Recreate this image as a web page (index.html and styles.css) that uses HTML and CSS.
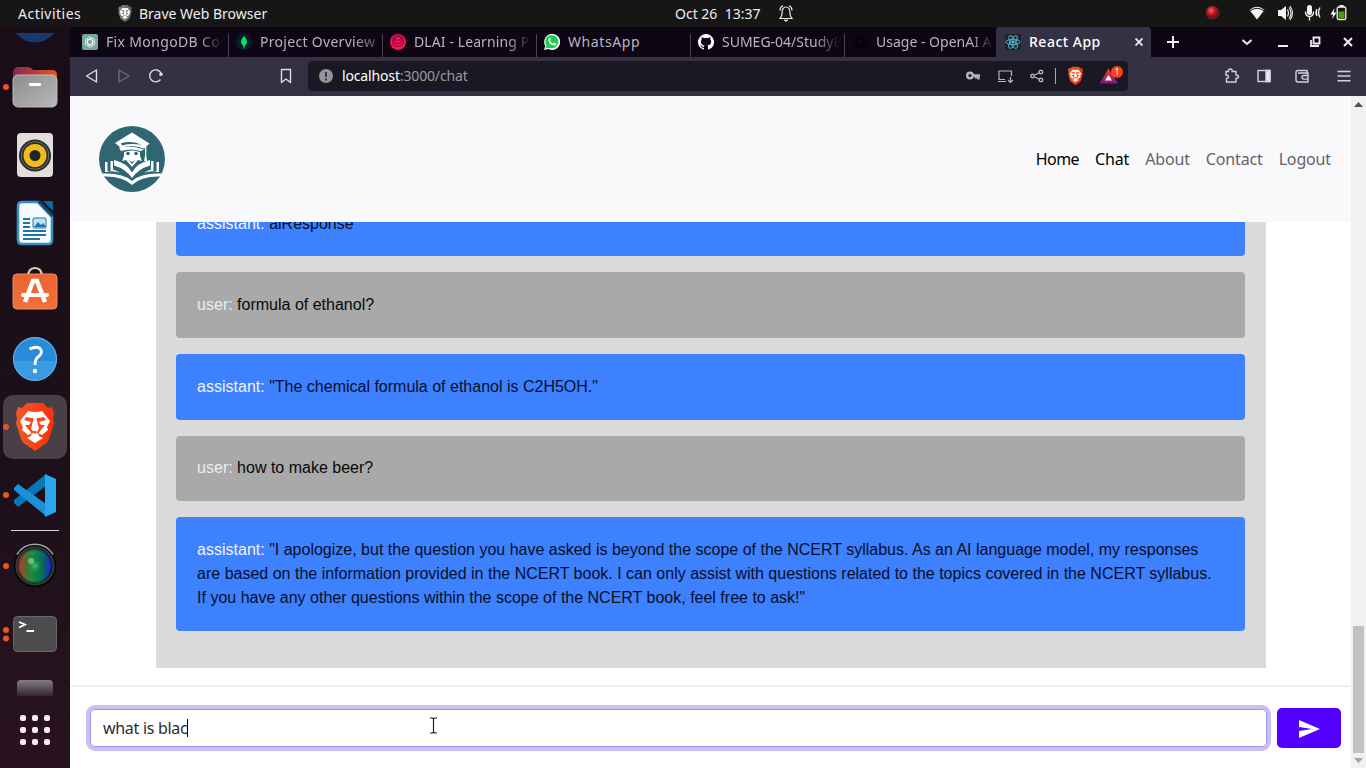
FILE: index.html
```html
<!DOCTYPE html>
<html lang="en">
<head>
<meta charset="utf-8">
<title>React App</title>
<link rel="stylesheet" href="styles.css">
</head>
<body>
<svg class="defs" width="0" height="0">
  <defs>
    <linearGradient id="folder"><stop offset="0" stop-color="#812850"/><stop offset="1" stop-color="#e95420"/></linearGradient>
    <linearGradient id="metal" x2="1" y2="1"><stop offset="0" stop-color="#8d8d8d"/><stop offset="1" stop-color="#b8b8b8"/></linearGradient>
    <linearGradient id="orange" x2="0" y2="1"><stop offset="0" stop-color="#ec6330"/><stop offset="1" stop-color="#f0713c"/></linearGradient>
    <linearGradient id="lionbg"><stop offset="0" stop-color="#f1562b"/><stop offset="1" stop-color="#ff3005"/></linearGradient>
    <linearGradient id="fade" x2="0" y2="1"><stop offset="0" stop-color="#857d83"/><stop offset="1" stop-color="#33282f"/></linearGradient>
    <linearGradient id="bat" x2="0" y2="1"><stop offset="0" stop-color="#ff3c10"/><stop offset="1" stop-color="#7a1590"/></linearGradient>
    <linearGradient id="lens"><stop offset="0" stop-color="#c43a28"/><stop offset=".4" stop-color="#1c9c4c"/><stop offset=".7" stop-color="#0d7860"/><stop offset="1" stop-color="#1424dc"/></linearGradient>
    <radialGradient id="lensdark"><stop offset="0" stop-color="#4cf08a" stop-opacity=".6"/><stop offset=".45" stop-color="#064018" stop-opacity=".2"/><stop offset=".85" stop-color="#000" stop-opacity=".05"/><stop offset="1" stop-color="#000" stop-opacity=".4"/></radialGradient>
    <radialGradient id="rec" cx=".4" cy=".35"><stop offset="0" stop-color="#f66"/><stop offset=".6" stop-color="#c4121e"/><stop offset="1" stop-color="#80101a"/></radialGradient>
    <symbol id="lion" viewBox="0 0 40 48">
      <path class="lion-shield" d="M12 0h16l5 5 4-1 2 6-1 6 1 4-5 16q-1 3-4 5L20 48 10 41q-3-2-4-5L1 20l1-4-1-6 2-6 4 1z"/>
      <path fill="#fff" d="M13 8q7 2 14 0l8 10-3 6 1 3-6 5-4-2 1 3 4 2-8 5-8-5 4-2 1-3-4 2-6-5 1-3-3-6z"/>
      <path class="lion-face" d="M11 14q4 1 7 1 1 1 0 3l-2 8 3 3-2 2-3-4-4-5 4 0 2-3-7-2zM29 14q-4 1-7 1-1 1 0 3l2 8-3 3 2 2 3-4 4-5-4 0-2-3 7-2zM17 28h6l-3 3z"/>
    </symbol>
    <symbol id="knot" viewBox="0 0 16 16">
      <g fill="none" stroke="currentColor" stroke-width="1"><path id="petal" d="M4.800 6.500V4q.3-2.500 2.800-2.800Q9.500 1.200 10.500 2.700M5.500 5.600 8.200 4 12 6.200"/><use href="#petal" transform="rotate(60 8 8)"/><use href="#petal" transform="rotate(120 8 8)"/><use href="#petal" transform="rotate(180 8 8)"/><use href="#petal" transform="rotate(240 8 8)"/><use href="#petal" transform="rotate(300 8 8)"/></g>
    </symbol>
  </defs>
</svg>
<div class="desktop">
  <header class="topbar">
    <span class="activities">Activities</span>
    <svg class="app-lion gray" width="14" height="17"><use href="#lion"/></svg>
    <span class="appname">Brave Web Browser</span>
    <span class="clock">Oct 26&nbsp; 13:37</span>
    <svg class="bell" width="14" height="17" viewBox="0 0 14 17" fill="none" stroke="#eee" stroke-width="1.2"><path d="M1 13.500q2-2 2-5Q3 2 7 2t4 6.500q0 3 2 5z"/><path d="M1 5.500Q1 2 4 .8M13 5.500Q13 2 10 .8"/><path d="M5 15h4l-2 1.500z" fill="#eee" stroke-width=".6"/></svg>
    <svg class="tray" width="170" height="27" viewBox="1196 0 170 27">
      <circle cx="1212.500" cy="12.500" r="6.500" fill="url(#rec)" stroke="#58272a"/>
      <path d="M1249.500 10Q1257 3.500 1264.500 10L1257 19.500z" fill="#f4f4f4"/><path d="M1250 10.800q7-5 14 0" stroke="#161616" fill="none"/>
      <path d="M1278 10h3l5-4v14l-5-4h-3z" fill="#f4f4f4"/><path d="M1287.500 9.500q2 3.500 0 7M1289 7.500q4 5.500 0 11M1290 6q5 7 0 14" fill="none" stroke="#eee" stroke-width="1.100"/>
      <rect x="1307" y="5" width="5" height="10" rx="2.500" fill="#f4f4f4"/><path d="M1305.500 11.500q0 5 4 5t4-5M1309.500 16v4.500M1317 9q-2 3.500 0 7M1320 7.500q-3 5 0 10" fill="none" stroke="#eee" stroke-width="1.400"/>
      <path d="M1333.500 8 1329.500 14.500h2.500l-.8 4.500 4.300-6.500h-2.700z" transform="translate(1)" fill="#f4f4f4"/><rect x="1337.200" y="7" width="8.600" height="12.500" rx="1.500" fill="#161616" stroke="#f4f4f4" stroke-width="1.300"/><path d="M1339.500 5h4v2h-4z" fill="#f4f4f4"/><path d="M1338.500 11.500h6v7h-6z" fill="#4e9a06"/>
    </svg>
  </header>

  <nav class="dock">
    <svg width="70" height="26"><path d="M15.500 6h39Q46 15.500 35 15.500T15.500 6" fill="#17396d"/></svg>
    <svg width="70" height="68"><circle cx="6" cy="34" r="3" fill="#e95420"/><path d="M13 22q0-8 5-8h10q3 0 5 3h19q5 0 5 5v12H13z" fill="url(#folder)"/><rect x="13" y="22" width="44" height="32" rx="5" fill="url(#metal)" stroke="#bbb"/><rect x="29" y="30" width="12" height="3" rx="1" fill="#fff"/></svg>
    <svg width="70" height="68"><rect x="17" y="12" width="36" height="44" rx="4" fill="#e2dedb"/><circle cx="35" cy="34.500" r="16" fill="#2b2b2b"/><circle cx="35" cy="34.500" r="13.800" fill="none" stroke="#74716d"/><circle cx="35" cy="34.500" r="11.500" fill="#f0bd18"/><circle cx="35" cy="34.500" r="5.500" fill="#252525"/></svg>
    <svg width="70" height="68"><path d="M21 13h17l14 15v23q0 4-4 4H22q-4 0-4-4V17q0-4 4-4z" fill="#f7fbfd" stroke="#3292c2" stroke-width="2.600"/><path d="M43 12h8q2 0 2 2v8z" fill="#0869a3"/><path d="M38.500 12 53 27" stroke="#144566" stroke-width="3"/><path d="M23 30h7M23 34h7M23 38h7M23 42h23M23 46h23M23 50h17" stroke="#2374a4" stroke-width="1.800"/><rect x="33" y="29" width="13" height="10" rx="1" fill="#c0e1f2" stroke="#2374a4"/><path d="m34 38 4-5 3 3 2-2 3 4z" fill="#2374a4"/></svg>
    <svg width="70" height="68"><path d="M28 20q0-9 7-9t7 9" fill="none" stroke="#ddd0a8" stroke-width="2.200"/><rect x="13" y="17" width="44" height="35" rx="4" fill="url(#orange)" stroke="#f58d5f"/><path d="M25 45 33 24h4l8 21" fill="none" stroke="#fff" stroke-width="4.500"/><rect x="21" y="36" width="28" height="4" rx="2" fill="#fff"/></svg>
    <svg width="70" height="68"><circle cx="35" cy="34" r="22" fill="#3a9be3"/><path d="M13 36a22 22 0 0 1 44 0z" fill="#278bd9"/><circle cx="35" cy="34" r="21.500" fill="none" stroke="#63b0e8"/><path d="M29.500 24q9-4 11.500 1 1.500 4-3 7-3 2-3 8" fill="none" stroke="#fff" stroke-width="2.800"/><circle cx="35" cy="46" r="2.200" fill="#fff"/></svg>
    <svg width="70" height="68"><rect x="3" y="2" width="64" height="64" rx="10" fill="#484044"/><circle cx="6" cy="34" r="3" fill="#e0562b"/><use href="#lion" x="15" y="10" width="40" height="48"/></svg>
    <svg width="70" height="68"><circle cx="6" cy="34" r="3" fill="#e95420"/><path d="M14 39v3l4 4 28-21V13z" fill="#0877b9"/><path d="m14 27 4-4 28 20v12L14 29z" fill="#1b91dc"/><path d="m45 13 11 5v33l-11 5z" fill="#2ca5ef"/></svg>
    <hr class="dock-line">
    <svg width="70" height="68"><circle cx="6" cy="34" r="3" fill="#e95420"/><circle cx="35" cy="34" r="22" fill="#080808" stroke="#1c1a1c"/><path d="M17 22.500a21 21 0 0 1 36 0" fill="none" stroke="#a9a9a9" stroke-width="1.500"/><circle cx="35" cy="34" r="18.500" fill="none" stroke="#393939" stroke-width="2"/><circle cx="35" cy="34" r="17" fill="url(#lens)"/><circle cx="35" cy="34" r="17" fill="url(#lensdark)"/><circle cx="31" cy="29" r="3" fill="#a9ef9f" opacity=".55"/></svg>
    <svg width="70" height="68"><circle cx="6" cy="30" r="3" fill="#e95420"/><circle cx="6" cy="38.500" r="3" fill="#e95420"/><rect x="13.500" y="16.500" width="43" height="35" rx="4" fill="#4c4c4c" stroke="#686868"/><path d="m19 22 6 2.500-6 3M26.500 31H34" fill="none" stroke="#fff" stroke-width="1.800"/></svg>
    <svg width="70" height="36"><path d="M17 28V16q0-4 4-4h28q4 0 4 4v12z" fill="url(#fade)"/></svg>
    <svg width="70" height="64" fill="#f7e8f1"><g id="dots"><rect x="20" y="11" width="6" height="6" rx="2"/><rect x="32" y="11" width="6" height="6" rx="2"/><rect x="44" y="11" width="6" height="6" rx="2"/></g><use href="#dots" y="12"/><use href="#dots" y="24"/></svg>
  </nav>

  <section class="browser">
    <div class="tabs">
      <div class="tab"><svg width="16" height="16"><rect width="16" height="16" rx="2" fill="#75a99c"/><use href="#knot" x="2" y="2" width="12" height="12" color="#fff"/></svg><span class="t1">Fix MongoDB Con</span></div>
      <div class="tab"><svg width="16" height="16"><circle cx="8" cy="8" r="8" fill="#071d2b"/><path d="M8 2q6 6 0 11Q2 8 8 2zM7.500 12h1v2.500h-1z" fill="#10e060"/></svg><span class="t2">Project Overview</span></div>
      <div class="tab"><svg width="16" height="16" fill="none" stroke="#8e0d38" stroke-width="1.200"><circle cx="8" cy="8" r="8" fill="#f51752" stroke="none"/><circle cx="8" cy="7" r="5.500"/><circle cx="8" cy="6" r="3.500"/><path d="M6 5q2 3 4 0"/></svg><span class="t3">DLAI - Learning Pl</span></div>
      <div class="tab"><svg width="16" height="16"><path d="M0 16 1.300 12A8 8 0 1 1 4.500 15z" fill="#fff"/><path d="m1.500 14.500.9-3A6.600 6.600 0 1 1 5 13.700z" fill="#19ce55"/><path d="M5 4q1-1 2 1l-1 1.500q1 2.500 3.500 3.200l1-1.200 2 1.200q0 2-2.300 1.900Q5 10.500 4.300 6z" fill="#fff"/></svg><span class="t4">WhatsApp</span></div>
      <div class="tab"><svg width="16" height="16" viewBox="0 0 16 16"><path fill="#fff" d="M8 0a8 8 0 0 0-2.530 15.590c.4.070.55-.17.55-.38v-1.490c-2.220.48-2.690-.94-2.690-.94-.36-.92-.89-1.170-.89-1.170-.73-.5.050-.49.050-.49.8.060 1.230.83 1.230.83.720 1.220 1.870.87 2.330.66.070-.52.280-.87.510-1.070-1.780-.2-3.640-.89-3.640-3.950 0-.87.310-1.590.82-2.150-.08-.2-.36-1.020.080-2.120 0 0 .67-.22 2.200.82a7.600 7.600 0 0 1 4 0c1.530-1.040 2.200-.82 2.200-.82.44 1.100.16 1.920.080 2.120.51.56.82 1.280.82 2.150 0 3.070-1.870 3.750-3.650 3.950.29.25.54.73.54 1.480v2.200c0 .21.150.46.550.38A8 8 0 0 0 8 0z"/></svg><span class="t5">SUMEG-04/StudyB</span></div>
      <div class="tab"><svg width="16" height="16" color="#000"><use href="#knot"/></svg><span class="t6">Usage - OpenAI A</span></div>
      <div class="tab active"><svg width="16" height="16" fill="none" stroke="#51bdd8" stroke-width=".9"><rect width="16" height="16" rx="1" fill="#20232a" stroke="none"/><ellipse cx="8" cy="8" rx="7" ry="2.700"/><ellipse cx="8" cy="8" rx="7" ry="2.700" transform="rotate(60 8 8)"/><ellipse cx="8" cy="8" rx="7" ry="2.700" transform="rotate(120 8 8)"/><circle cx="8" cy="8" r="1.200" fill="#51bdd8"/></svg><span class="t7">React App</span><svg class="close" width="8" height="8" stroke="#eee" stroke-width="1.800"><path d="m.5.5 7 7M7.500.5l-7 7"/></svg></div>
      <svg class="winctl" width="215" height="30" viewBox="1151 27 215 30" fill="none" stroke="#eee" stroke-width="2"><path d="M1167 42h12M1173 36v12"/><path d="m1242.500 40 4.500 4 4.500-4"/><path d="M1278 46h10"/><path d="M1313.500 37.500h6v6h-6zM1311 40v6h8" stroke-width="1.800"/><path d="m1344 38 8 8M1352 38l-8 8"/></svg>
    </div>
    <div class="toolbar">
      <svg width="238" height="39" viewBox="70 57 238 39" fill="none" stroke="#dcdbe2" stroke-width="1.400" stroke-linejoin="round"><path d="M96.500 70v12l-10-6z"/><path d="M119 70v12l10-6z" stroke="#6c697a"/><path d="M160.500 79.500A6 6 0 1 1 161 73"/><circle cx="161" cy="74.300" r="1.800" fill="#dcdbe2" stroke="none"/><path d="M281.500 69.500h9v13l-4.500-3.500-4.500 3.500z"/></svg>
      <div class="address">
        <svg width="34" height="30"><circle cx="18" cy="15" r="7" fill="#96959d"/><path d="M18 11v5M18 17.500v2" stroke="#32313b" stroke-width="1.800"/></svg>
        <span class="url">localhost<i>:3000/chat</i></span>
        <svg class="addr-icons" width="168" height="30" viewBox="960 61 168 30" fill="none" stroke="#b7b6be" stroke-width="1.400">
          <circle cx="970" cy="75.500" r="2.800" stroke-width="2.400"/><path d="M973 75.500h7M978.500 76v3.500M976 76v2.500" stroke-width="2.400"/>
          <path d="M1005 79.500H999V71h12.500v5M998 81.500h8M1010.500 77v5M1008 80l2.500 2.500 2.500-2.500" stroke-width="1.200"/>
          <circle cx="1032.500" cy="76" r="1.800"/><circle cx="1041" cy="72" r="1.800"/><circle cx="1041" cy="80" r="1.800"/><path d="m1034.500 75 4.500-2M1034.500 77l4.500 2" stroke-width="1.100"/>
          <path d="M1055.500 68v16" stroke="#aaa" stroke-width="1"/>
          <use href="#lion" x="1067" y="66.500" width="17" height="18.500" stroke="none"/>
          <path d="m1108.500 68.500 9.500 15h-18.500z" fill="url(#bat)" stroke="none"/><path d="m1108.500 75 3.500 5.500h-7z" fill="#fff" stroke="none"/><circle cx="1117" cy="72" r="6" fill="#fb4214" stroke="none"/><text x="1114.500" y="75.200" class="badge">1</text>
        </svg>
      </div>
      <svg width="238" height="39" viewBox="1128 57 238 39" fill="none" stroke="#d4d3da" stroke-width="1.400"><path d="M1226 71.500h2.500q-.5-2.500 1.800-2.500t1.800 2.500h3.900v3.500q2.500.2 2.500 1.800t-2.500 1.700v3.500h-9.500v-3.500q2-.3 2-1.800t-2.500-1.700z"/><rect x="1258" y="70.500" width="12" height="11"/><path d="M1266 70.500h4v11h-4z" fill="#eee"/><path d="M1307 73v-2.500h-9q-2 0-2 2V80q0 2 2 2h10v-9h-10M1308 75.500h-4q-2 0-2 1.800t2 1.800h4"/><path d="M1337.500 71.500h13M1337.500 76h13M1337.500 80.700h13"/></svg>
    </div>
    <div class="viewport">
      <main class="page">
        <header class="navbar">
          <svg class="logo" width="66" height="66" viewBox="0 0 66 66"><circle cx="33" cy="33" r="33" fill="#2f6672"/><g fill="#fff"><path d="M33 6.500 50.500 17.500 45 22.500Q34 18 21.500 21.500L16 17z"/><path d="M20 21.500q12-3 25 2l-3 1.500q-10-3-20 0z"/><path d="M46 18.500h1.300V30l.8 5h-3l.9-5z"/><path d="M25 26q8-3 16 0v4l2 5-4-1-6 7-6-7-4 1 2-5z"/><path d="M3 47.500q21-1 30 7.500 9-8.500 30-7.500l-1.500 3Q42 50 33 59 24 50 4.500 50.500z"/><path d="M33 52Q27 43 15 39.500V34q13 3 18 12.500Q38 37 51 34v5.500Q39 43 33 52z"/><path d="M6 36h2.500v9.500l5 .5H6zM11.500 35h2.500v8.500l7 3-9.500-1.500zM60 36h-2.500v9.500l-5 .5H60zM54.500 35H52v8.500l-7 3 9.500-1.500z"/></g><g fill="#2f6672"><circle cx="29" cy="27.500" r="1.800"/><circle cx="37" cy="27.500" r="1.800"/><path d="M22 17q12-3 21 2-11-2-20 .5zM29.500 34l3.500 2 3.500-2-3.500 4z"/></g></svg>
          <div class="links"><a class="on n1">Home</a><a class="on n2">Chat</a><a class="n3">About</a><a class="n4">Contact</a><a class="n5">Logout</a></div>
        </header>
        <div class="history">
          <div class="thread">
            <p class="msg assistant"><b>assistant:</b> aiResponse</p>
            <p class="msg user"><b>user:</b> formula of ethanol?</p>
            <p class="msg assistant"><b>assistant:</b> "The chemical formula of ethanol is C2H5OH."</p>
            <p class="msg user"><b>user:</b> how to make beer?</p>
            <p class="msg assistant"><b>assistant:</b> "I apologize, but the question you have asked is beyond the scope of the NCERT syllabus. As an AI language model, my responses are based on the information provided in the NCERT book. I can only assist with questions related to the topics covered in the NCERT syllabus. If you have any other questions within the scope of the NCERT book, feel free to ask!"</p>
          </div>
        </div>
        <footer class="composer">
          <div class="field"><span>what is blac</span><i class="caret"></i></div>
          <div class="send"><svg width="22" height="20"><path d="M1 2 22 11 1 20V13L14 11 1 9z" fill="#fff"/></svg></div>
        </footer>
      </main>
      <div class="scrollbar"><svg width="9" height="5"><path d="M0 5 4.500 0 9 5z" fill="#505050"/></svg><div class="thumb"></div><svg width="9" height="5"><path d="M0 0h9L4.500 5z" fill="#a3a3a3"/></svg></div>
    </div>
  </section>
  <svg class="cursor" width="9" height="17" fill="none"><path d="M1 1h2.500l1 1 1-1H8M4.500 2v13M1 16h2.500l1-1 1 1H8" stroke="#222" stroke-width="1.200"/></svg>
</div>
</body>
</html>
```
FILE: styles.css
```css
* { box-sizing: border-box; }
body { margin: 0; overflow: hidden; font-family: "Noto Sans", "Open Sans", sans-serif; }
svg { display: block; flex: none; overflow: hidden; }
.defs { position: absolute; }
.desktop { position: relative; display: grid; grid-template: 27px 741px / 70px 1296px; width: 1366px; height: 768px; background: #1a0e19; }

.topbar { grid-column: 1 / 3; display: flex; align-items: center; background: #161616; color: #eee; font-size: 14px; white-space: nowrap; }
.activities { width: 100px; padding-left: 18px; letter-spacing: .5px; }
.app-lion { margin-left: 18px; }
.appname { width: 543px; padding-left: 7px; }
.clock { width: 104px; }
.bell { margin-right: auto; }
.tray { margin-top: -1px; }

.dock { background: linear-gradient(#190d18, #1c101b 60%, #29131f); }
.dock-line { width: 48px; height: 1px; margin: 1px 11px; border: 0; background: #d8d3d7; }
.lion-shield { fill: url(#lionbg); }
.lion-face { fill: #f94a1d; }
.gray { filter: grayscale(1) brightness(1.1); }

.browser { display: flex; flex-direction: column; min-width: 0; }
.tabs { display: flex; height: 30px; padding-left: 4px; background: #0e0515; }
.tab { display: flex; align-items: center; gap: 8px; width: 154px; padding: 0 6px 0 7px; color: #b9b5bf; font-size: 14px; white-space: nowrap; background: linear-gradient(#48434f, #48434f) right bottom / 1px 23px no-repeat; }
.tab:first-child { width: 155px; padding-left: 8px; }
.tab:nth-child(6) { background: none; width: 151px; }
.tab span { flex: 1; overflow: hidden; line-height: 20px; padding-bottom: 1px; mask-image: linear-gradient(90deg, #000 80%, transparent 100%); }
.tab .t1 { letter-spacing: .35px; }
.tab .t2 { letter-spacing: .3px; mask-image: linear-gradient(90deg, #000 80%, #0005 100%); }
.tab .t3 { letter-spacing: .1px; }
.tab .t4 { mask-image: none; letter-spacing: .6px; }
.tab .t6 { letter-spacing: 0; margin-right: -4px; }
.tab.active { width: 155px; background: #353144; color: #fff; border-radius: 4px 4px 0 0; padding: 0 8px 0 9px; }
.tab.active span { mask-image: none; font-weight: 500; letter-spacing: .5px; }

.toolbar { display: flex; height: 39px; background: #353144; }
.address { display: flex; align-items: center; width: 820px; height: 30px; margin-top: 4px; border-radius: 4px; background: #1a1823; }
.url { padding-bottom: 1px; color: #fff; font-size: 14px; letter-spacing: -.15px; }
.url i { color: #9b9aa2; font-style: normal; }
.addr-icons { margin-left: auto; }
.badge { font: 9px "Noto Sans", sans-serif; fill: #fff; stroke: none; }

.viewport { display: flex; height: 672px; background: #fff; }
.page { display: flex; flex-direction: column; width: 1281px; }
.navbar { display: flex; align-items: center; justify-content: space-between; height: 126px; padding: 0 20px 0 29px; background: #f9f9fc; }
.links { display: flex; gap: 16px; font-size: 16px; letter-spacing: -.15px; color: #636366; }
.links .on { color: #000; }
.links .n1 { letter-spacing: -.6px; }
.history { display: flex; flex-direction: column; justify-content: flex-end; height: 465px; overflow: hidden; padding: 0 85px 19px 86px; }
.thread { display: flex; flex-direction: column; flex: none; gap: 16px; padding: 20px 21px 37.2px 20px; background: #dadada; font: 16px/24px "Liberation Sans", Arial, sans-serif; }
.msg { margin: 0; padding: 20.8px 20.8px 20.8px 21.1px; border-radius: 4px; }
.msg b { font-weight: 400; color: #f0f4ff; }
.user { background: #a9a9a9; color: #080808; }
.user b { color: #ececec; }
.assistant { background: #3d81ff; color: #050f2b; }
.composer { display: flex; align-items: center; gap: 10px; height: 81px; padding: 1px 10px 0 20px; background: #fff; box-shadow: 0 -1px 3px #0002; }
.field { display: flex; align-items: center; width: 1177px; height: 38px; padding-left: 12px; border: 1px solid #9a94e8; border-radius: 5px; box-shadow: 0 0 0 4px #cbbef7; color: #2b2b2f; font-size: 16px; letter-spacing: -.3px; }
.caret { width: 1px; height: 18px; background: #000; }
.send { display: flex; align-items: center; justify-content: center; width: 64px; height: 40px; border-radius: 5px; background: #5200ff; }
.scrollbar { display: flex; flex-direction: column; align-items: center; width: 15px; padding: 6px 0 5px; background: #f1f1f1; }
.thumb { width: 11px; height: 127px; margin: auto 0 5px; background: #c1c1c1; }
.cursor { position: absolute; left: 429px; top: 717px; }
```
